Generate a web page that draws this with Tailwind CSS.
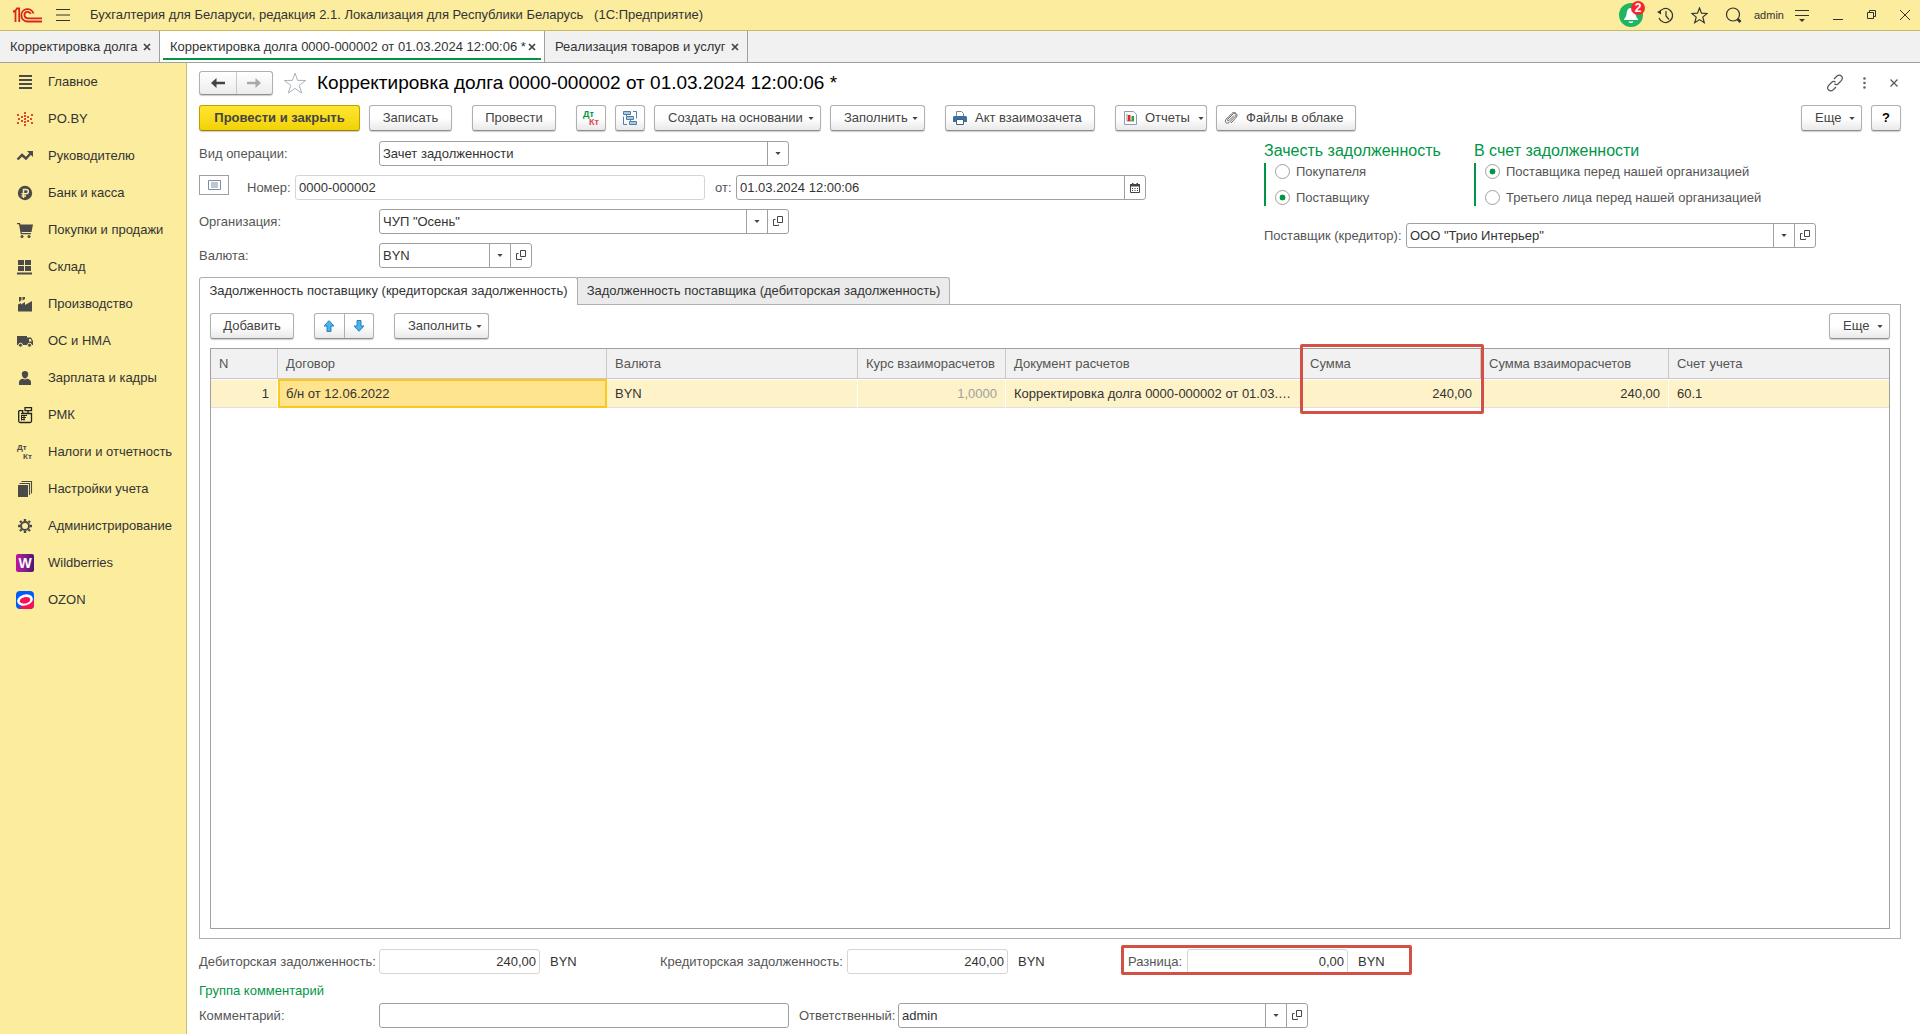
<!DOCTYPE html>
<html lang="ru">
<head>
<meta charset="utf-8">
<title>Корректировка долга — 1С:Предприятие</title>
<script src="https://cdn.jsdelivr.net/npm/@tailwindcss/browser@4"></script>
</head>
<body class="flex min-h-screen flex-col bg-white font-['Liberation_Sans',Arial,sans-serif] text-[13px] leading-4 text-[#333]">

<svg class="hidden" aria-hidden="true">
  <symbol id="caret" viewBox="0 0 7 4"><path d="M0 0h7L3.500 4z" fill="#444"/></symbol>
  <symbol id="open" viewBox="0 0 11 11"><path d="M4.500.5h5v6h-5zM2.500 3.500h-2v6h5v-1" fill="none" stroke="#444"/></symbol>
  <symbol id="cross" viewBox="0 0 8 8"><path d="M1 1l6 6M7 1L1 7" stroke="#444" stroke-width="1.700"/></symbol>
</svg>

<header class="flex h-[31px] items-center border-b border-[#c9b865] bg-[#fbec9e] pl-3">
  <svg class="h-[18px] w-[31px]" viewBox="0 0 31 18" fill="none" stroke="#d9261c" stroke-width="1.800" aria-label="1С"><path d="M1 5.500h2.500V16M1 5.500C3 5 4.500 4 5 2.500h2.200V16M21.500 7.500a6.200 6.200 0 1 0-6 8H30M18.700 8a3.200 3.200 0 1 0-3 4.300H30"/></svg>
  <button class="ml-3 h-4 w-4" aria-label="Меню"><svg class="h-4 w-4" viewBox="0 0 16 16"><path d="M1 2.500h14M1 8h14M1 13.500h14" stroke="#333" stroke-width="1.200"/></svg></button>
  <h1 class="ml-[19px] whitespace-pre">Бухгалтерия для Беларуси, редакция 2.1. Локализация для Республики Беларусь   (1С:Предприятие)</h1>
  <div class="ml-auto flex items-center">
    <button class="relative h-6 w-6" aria-label="Уведомления">
      <svg class="h-6 w-6" viewBox="0 0 24 24"><circle cx="12" cy="12" r="12" fill="#1fb562"/><path d="M12 5c-3.500 0-4 3-4.500 6-.4 2.500-1.200 4-2.500 5v1h14v-1c-1.300-1-2.100-2.500-2.500-5C16 8 15.500 5 12 5zM9.500 18.500h5c-1 2-4 2-5 0z" fill="#fff"/></svg>
      <span class="absolute -top-[2px] left-3 h-[14px] w-[14px] rounded-full bg-[#f8252f] text-xs leading-[14px] font-bold text-white">2</span>
    </button>
    <button class="ml-[14px] h-[17px] w-[17px]" aria-label="История"><svg class="h-[17px] w-[17px]" viewBox="0 0 17 17" fill="none" stroke="#333" stroke-width="1.200"><path d="M2 6a7 7 0 1 1 0 5M9 4v5l3 3.500"/><path d="M0 5l4 2.500L4 3z" fill="#333" stroke="none"/></svg></button>
    <button class="ml-[17px] h-[17px] w-[17px]" aria-label="Избранное"><svg class="h-[17px] w-[17px]" viewBox="0 0 17 17" fill="none" stroke="#333" stroke-width="1.200"><path d="M8.500 1l2 5.200 5.700.3-4.400 3.600 1.500 5.600-4.800-3.100-4.800 3.100 1.500-5.600L.8 6.500l5.700-.3z"/></svg></button>
    <button class="ml-[17px] h-[17px] w-[17px]" aria-label="Поиск"><svg class="h-[17px] w-[17px]" viewBox="0 0 17 17" fill="none" stroke="#333" stroke-width="1.200"><circle cx="8" cy="7.500" r="6.500"/><path d="M12.500 12l3 3" stroke-width="2.600"/></svg></button>
    <a href="#" class="ml-3 w-7 text-[11px]">admin</a>
    <button class="ml-3 h-4 w-4" aria-label="Настройки"><svg class="h-4 w-4" viewBox="0 0 16 16"><path d="M1 3.500h14M1 8.500h14" stroke="#333" stroke-width="1.200"/><path d="M5 12h6l-3 3z" fill="#333"/></svg></button>
    <button class="ml-[22px] h-3 w-3" aria-label="Свернуть"><svg class="h-3 w-3" viewBox="0 0 12 12"><path d="M1 10.500h10" stroke="#333"/></svg></button>
    <button class="ml-[22px] h-3 w-3" aria-label="Восстановить"><svg class="h-3 w-3" viewBox="0 0 12 12" fill="none" stroke="#333"><path d="M3.500 3.500v-2h6v6h-2M1.500 3.500h6v6h-6z"/></svg></button>
    <button class="mr-[9px] ml-[21px] h-3 w-3" aria-label="Закрыть"><svg class="h-3 w-3" viewBox="0 0 12 12"><path d="M1 1l10 10M11 1L1 11" stroke="#333"/></svg></button>
  </div>
</header>

<nav class="flex h-8 border-b border-[#a0a0a0] bg-[#f1f1f1]" aria-label="Открытые окна">
  <div class="flex w-[160px] items-center justify-between border-r border-[#a0a0a0] pr-2 pl-[10px]"><a href="#">Корректировка долга</a><button aria-label="Закрыть вкладку"><svg class="h-2 w-2"><use href="#cross"/></svg></button></div>
  <div class="relative flex w-[385px] items-center justify-between border-r border-[#a0a0a0] bg-white pr-2 pl-[10px]"><a href="#">Корректировка долга 0000-000002 от 01.03.2024 12:00:06 *</a><button aria-label="Закрыть вкладку"><svg class="h-2 w-2"><use href="#cross"/></svg></button><span class="absolute inset-x-[3px] bottom-[2px] h-[2px] bg-[#009646]"></span></div>
  <div class="flex w-[203px] items-center justify-between border-r border-[#a0a0a0] pr-2 pl-[10px]"><a href="#">Реализация товаров и услуг</a><button aria-label="Закрыть вкладку"><svg class="h-2 w-2"><use href="#cross"/></svg></button></div>
</nav>

<div class="flex flex-1">
  <nav class="w-[187px] flex-none border-r border-[#cdbd72] bg-[#fbec9e]" aria-label="Разделы">
    <a href="#" class="flex h-[37px] items-center gap-[14px] pl-4"><svg class="h-[18px] w-[18px]" viewBox="0 0 18 18"><path d="M3 3h13M3 7h13M3 11h13M3 15h13" stroke="#4a4a4a" stroke-width="2"/></svg>Главное</a>
    <a href="#" class="flex h-[37px] items-center gap-[14px] pl-4"><svg class="h-[18px] w-[18px]" viewBox="0 0 18 18" fill="#e0492c"><path d="M8 2h2v2H8zM8 5h2v2H8zM8 8h2v2H8zM8 11h2v2H8zM8 14h2v2H8zM5 6h2v2H5zM5 10h2v2H5zM11 6h2v2h-2zM11 10h2v2h-2zM1 4h2v2H1zM2 8h2v2H2zM1 12h2v2H1zM15 4h2v2h-2zM14 8h2v2h-2zM15 12h2v2h-2z"/></svg>PO.BY</a>
    <a href="#" class="flex h-[37px] items-center gap-[14px] pl-4"><svg class="h-[18px] w-[18px]" viewBox="0 0 18 18"><path d="M1.500 12.500l4.500-4.500 4 3.500 5-5.500" fill="none" stroke="#4a4a4a" stroke-width="2.400"/><path d="M11 4h6v6z" fill="#4a4a4a"/></svg>Руководителю</a>
    <a href="#" class="flex h-[37px] items-center gap-[14px] pl-4"><svg class="h-[18px] w-[18px]" viewBox="0 0 18 18"><circle cx="9" cy="9" r="7.200" fill="#4a4a4a"/><path d="M7.500 14V5.500h2.700a2 2 0 0 1 0 4.200H5.500M5.500 12h4.500" fill="none" stroke="#fbec9e" stroke-width="1.500"/></svg>Банк и касса</a>
    <a href="#" class="flex h-[37px] items-center gap-[14px] pl-4"><svg class="h-[18px] w-[18px]" viewBox="0 0 18 18" fill="#4a4a4a"><path d="M1 2h3l.6 1.500H17L15.500 11H5.600l.3 1H15v1.300H4.800L3 3.300H1z"/><circle cx="6" cy="15.500" r="1.500"/><circle cx="13" cy="15.500" r="1.500"/></svg>Покупки и продажи</a>
    <a href="#" class="flex h-[37px] items-center gap-[14px] pl-4"><svg class="h-[18px] w-[18px]" viewBox="0 0 18 18" fill="#4a4a4a"><path d="M2 2h6v5H2zM9 2h6v5H9zM2 8h6v5H2zM9 8h6v5H9zM1 14.500h15v2H1z"/></svg>Склад</a>
    <a href="#" class="flex h-[37px] items-center gap-[14px] pl-4"><svg class="h-[18px] w-[18px]" viewBox="0 0 18 18" fill="#4a4a4a"><path d="M2 16.500v-7l3-1.500v1.500L9 7v3l7-4v10.500zM3 2h2.500v3L3 7zM6.500 2H9v2L6.500 5.500z"/></svg>Производство</a>
    <a href="#" class="flex h-[37px] items-center gap-[14px] pl-4"><svg class="h-[18px] w-[18px]" viewBox="0 0 18 18" fill="#4a4a4a"><path fill-rule="evenodd" d="M1 4h10v9H1zM11 5.500h4L17 9v4h-6zM13 7v2.500h2.800L14.800 7z"/><circle cx="4.500" cy="13.200" r="2" stroke="#fbec9e"/><circle cx="13.500" cy="13.200" r="2" stroke="#fbec9e"/></svg>ОС и НМА</a>
    <a href="#" class="flex h-[37px] items-center gap-[14px] pl-4"><svg class="h-[18px] w-[18px]" viewBox="0 0 18 18" fill="#4a4a4a"><path d="M9 2c2 0 3.200 1.200 3.200 3S11 9.500 9 9.500 5.800 7 5.800 5 7 2 9 2zM3 16v-3c0-2 2-3 4-3.200 1.300.8 2.700.8 4 0 2 .2 4 1.200 4 3.200v3z"/></svg>Зарплата и кадры</a>
    <a href="#" class="flex h-[37px] items-center gap-[14px] pl-4"><svg class="h-[18px] w-[18px]" viewBox="0 0 18 18" fill="none" stroke="#222" stroke-width="1.300"><path d="M9 1.700h6.500v3H9zM12 5v2M2.700 4.700h4V7M2.700 4.700V15c0 1 .5 1.500 1.500 1.500H14c1 0 1.500-.5 1.500-1.500V7.500H5"/><path d="M5 9.500h6M5 11.500h5M5 13.500h4M5.500 9v5.500M8 9v5.500" stroke-width="1"/></svg>РМК</a>
    <a href="#" class="flex h-[37px] items-center gap-[14px] pl-4"><span class="flex h-[18px] w-[18px] flex-col text-[8px] leading-[9px] font-bold text-[#4a4a4a]"><span class="pl-px">Дт</span><span class="pl-[7px]">Кт</span></span>Налоги и отчетность</a>
    <a href="#" class="flex h-[37px] items-center gap-[14px] pl-4"><svg class="h-[18px] w-[18px]" viewBox="0 0 18 18"><path d="M2 5h10v12H2z" fill="#4a4a4a"/><path d="M3.500 3.500h10V15M5.500 1.500h10v12" fill="none" stroke="#4a4a4a" stroke-width="1.100"/></svg>Настройки учета</a>
    <a href="#" class="flex h-[37px] items-center gap-[14px] pl-4"><svg class="h-[18px] w-[18px]" viewBox="0 0 18 18" fill="none" stroke="#4a4a4a"><circle cx="9" cy="9" r="4" stroke-width="2"/><path d="M9 4V2M9 16v-2M4 9H2M16 9h-2M5.500 5.500L4 4M14 14l-1.500-1.500M5.500 12.500L4 14M14 4l-1.500 1.500" stroke-width="2.400"/></svg>Администрирование</a>
    <a href="#" class="flex h-[37px] items-center gap-[14px] pl-4"><span class="flex h-[18px] w-[18px] items-center justify-center rounded-[2px] bg-linear-to-r from-[#c3109c] to-[#4a1478] text-sm font-bold text-white">W</span>Wildberries</a>
    <a href="#" class="flex h-[37px] items-center gap-[14px] pl-4"><svg class="h-[18px] w-[18px]" viewBox="0 0 18 18"><rect width="18" height="18" rx="4" fill="#005bff"/><path d="M3 16.500L18 9v5a4 4 0 0 1-4 4H5z" fill="#f91155"/><ellipse cx="9" cy="9" rx="8" ry="5.500" fill="#fff" transform="rotate(-15 9 9)"/><ellipse cx="9" cy="9.300" rx="5.300" ry="3.200" fill="#f91155" transform="rotate(-12 9 9)"/></svg>OZON</a>
  </nav>

  <main class="flex min-w-0 flex-1 flex-col pt-2 pr-[19px] pb-[6px] pl-3">
    <div class="flex h-6 items-center">
      <div class="flex h-6 w-[74px] rounded-[3px] border border-[#b0b0b0] border-b-[#8f8f8f] bg-linear-to-b from-white to-[#ececec] shadow-[0_1px_1px_#ccc]">
        <button class="flex flex-1 items-center justify-center border-r border-[#c8c8c8]" aria-label="Назад"><svg class="h-3 w-[14px]" viewBox="0 0 14 12"><path d="M0 6l5.500-5v3.700H14v2.600H5.500V11z" fill="#444"/></svg></button>
        <button class="flex flex-1 items-center justify-center" aria-label="Вперед"><svg class="h-3 w-[14px]" viewBox="0 0 14 12"><path d="M14 6L8.500 1v3.700H0v2.600h8.500V11z" fill="#aaa"/></svg></button>
      </div>
      <button class="ml-[10px] h-6 w-6" aria-label="В избранное"><svg class="h-6 w-6" viewBox="0 0 24 24"><path d="M12 2l2.600 7.400 8 .1-6.300 4.800 2.300 7.700-6.600-4.600L5.400 22l2.300-7.700L1.400 9.500l8-.1z" fill="none" stroke="#aab0b8"/></svg></button>
      <h2 class="ml-[10px] text-[19px] leading-6 text-black">Корректировка долга 0000-000002 от 01.03.2024 12:00:06 *</h2>
      <button class="ml-auto h-[18px] w-[18px]" aria-label="Ссылка"><svg class="h-[18px] w-[18px]" viewBox="0 0 18 18" fill="none" stroke="#555" stroke-width="1.200"><path d="M8 5l3-3c3-2.500 7 1 4.500 4.300L12.500 9.500c-1.200 1.200-3 1.200-4 .3M10 13l-3 3c-3 2.500-7-1-4.500-4.300L5.500 8.500c1.200-1.200 3-1.200 4-.3"/></svg></button>
      <button class="ml-3 flex h-4 w-4 items-center justify-center" aria-label="Действия"><svg class="h-3 w-[3px]" viewBox="0 0 3 12" fill="#666"><circle cx="1.500" cy="1.500" r="1.300"/><circle cx="1.500" cy="6" r="1.300"/><circle cx="1.500" cy="10.500" r="1.300"/></svg></button>
      <button class="mr-[3px] ml-[18px] h-2 w-2" aria-label="Закрыть"><svg class="h-2 w-2" viewBox="0 0 8 8"><path d="M.5.5l7 7M7.500.5l-7 7" stroke="#555" stroke-width="1.200"/></svg></button>
    </div>

    <div class="mt-[10px] flex h-[26px] text-[#444]">
      <button class="w-[161px] rounded-[3px] border border-[#c0a000] border-b-[#a08500] bg-linear-to-b from-[#ffe62e] to-[#f2d200] font-bold shadow-[0_1px_1px_#ccc]">Провести и закрыть</button>
      <button class="ml-[9px] w-[83px] rounded-[3px] border border-[#b0b0b0] border-b-[#8f8f8f] bg-linear-to-b from-white from-50% to-[#e9e9e9] shadow-[0_1px_1px_#ccc]">Записать</button>
      <button class="ml-5 w-[84px] rounded-[3px] border border-[#b0b0b0] border-b-[#8f8f8f] bg-linear-to-b from-white from-50% to-[#e9e9e9] shadow-[0_1px_1px_#ccc]">Провести</button>
      <button class="ml-5 flex w-[30px] flex-col justify-center rounded-[3px] border border-[#b0b0b0] border-b-[#8f8f8f] bg-linear-to-b from-white from-50% to-[#e9e9e9] text-left text-[9px] leading-[8px] font-bold shadow-[0_1px_1px_#ccc]"><span class="pl-[6px] text-[#009646]">Дт</span><span class="pl-[12px] text-[#e04848]">Кт</span></button>
      <button class="ml-[9px] flex w-[30px] items-center justify-center rounded-[3px] border border-[#b0b0b0] border-b-[#8f8f8f] bg-linear-to-b from-white from-50% to-[#e9e9e9] shadow-[0_1px_1px_#ccc]" aria-label="Структура подчиненности"><svg class="h-4 w-4" viewBox="0 0 16 16" stroke="#4f7fa8"><path d="M1.500 1.500h7v3h-7zM4.500 6.500h7v3h-7zM7.500 11.500h7v3h-7z" fill="#a9c8e4"/><path d="M11 1.500h3.500v7M1.500 6.500v8H5M4.500 4.500v2M8.500 9.500v2" fill="none"/></svg></button>
      <button class="ml-[9px] flex w-[167px] items-center justify-between rounded-[3px] border border-[#b0b0b0] border-b-[#8f8f8f] bg-linear-to-b from-white from-50% to-[#e9e9e9] pr-[6px] pl-[13px] shadow-[0_1px_1px_#ccc]">Создать на основании<svg class="mt-px h-[3px] w-[6px]"><use href="#caret"/></svg></button>
      <button class="ml-[9px] flex w-[95px] items-center justify-between rounded-[3px] border border-[#b0b0b0] border-b-[#8f8f8f] bg-linear-to-b from-white from-50% to-[#e9e9e9] pr-[6px] pl-[13px] shadow-[0_1px_1px_#ccc]">Заполнить<svg class="mt-px h-[3px] w-[6px]"><use href="#caret"/></svg></button>
      <button class="ml-5 flex w-[150px] items-center gap-2 rounded-[3px] border border-[#b0b0b0] border-b-[#8f8f8f] bg-linear-to-b from-white from-50% to-[#e9e9e9] pl-[7px] shadow-[0_1px_1px_#ccc]"><svg class="h-[14px] w-[14px]" viewBox="0 0 14 14"><path d="M3.500 5V.5h5l2 2V5" fill="#fff" stroke="#6d8ba8"/><path d="M0 6l1-1h12l1 1v5H0z" fill="#3f6f9e"/><path d="M3.500 8.500h7v5h-7z" fill="#fff" stroke="#3f5f80"/></svg>Акт взаимозачета</button>
      <button class="ml-5 flex w-[92px] items-center gap-2 rounded-[3px] border border-[#b0b0b0] border-b-[#8f8f8f] bg-linear-to-b from-white from-50% to-[#e9e9e9] pr-[6px] pl-2 shadow-[0_1px_1px_#ccc]"><svg class="h-[14px] w-[13px] flex-none" viewBox="0 0 13 14"><path d="M.5.5h9l3 3v10H.5z" fill="#fff" stroke="#8b9bb0"/><path d="M3 3v7h7" fill="none" stroke="#888"/><path d="M4 4h2.500v6H4z" fill="#e22"/><path d="M7.500 5H10v5H7.500z" fill="#2a3"/></svg>Отчеты<svg class="mt-px ml-auto h-[3px] w-[6px] flex-none"><use href="#caret"/></svg></button>
      <button class="ml-[9px] flex w-[140px] items-center gap-2 rounded-[3px] border border-[#b0b0b0] border-b-[#8f8f8f] bg-linear-to-b from-white from-50% to-[#e9e9e9] pl-[7px] shadow-[0_1px_1px_#ccc]"><svg class="h-[14px] w-[14px]" viewBox="0 0 14 14" fill="none" stroke="#666"><path d="M10 4.500l-5 5c-1 1-2.200-.2-1.300-1.200L9 3c1.800-1.700 4 .5 2.300 2.300l-6 6c-2.500 2.400-5.500-.6-3.100-3.100L8 2.300C10-.2 14.500 3 12.500 6l-5.500 6"/></svg>Файлы в облаке</button>
      <button class="ml-auto flex w-[61px] items-center justify-between rounded-[3px] border border-[#b0b0b0] border-b-[#8f8f8f] bg-linear-to-b from-white from-50% to-[#e9e9e9] pr-[6px] pl-[13px] shadow-[0_1px_1px_#ccc]">Еще<svg class="mt-px h-[3px] w-[6px]"><use href="#caret"/></svg></button>
      <button class="ml-[9px] w-[30px] rounded-[3px] border border-[#b0b0b0] border-b-[#8f8f8f] bg-linear-to-b from-white from-50% to-[#e9e9e9] font-bold text-black shadow-[0_1px_1px_#ccc]">?</button>
    </div>

    <div class="mt-[10px] flex">
      <div class="flex w-[1065px] flex-none flex-col gap-[9px]">
        <div class="flex h-[25px] items-center">
          <label for="op" class="w-[180px] text-[#555]">Вид операции:</label>
          <div class="flex h-[25px] w-[410px] rounded-[3px] border border-[#a0a0a0]">
            <select id="op" class="h-full min-w-0 flex-1 appearance-none bg-transparent pl-[3px] outline-none"><option>Зачет задолженности</option></select>
            <span class="flex w-[21px] items-center justify-center border-l border-[#a0a0a0]"><svg class="h-[3px] w-[6px]"><use href="#caret"/></svg></span>
          </div>
        </div>
        <div class="flex h-[25px] items-center">
          <button class="flex h-5 w-[30px] items-center justify-center self-start border border-[#a0a0a0]" aria-label="Реквизиты"><svg class="h-[10px] w-[13px]" viewBox="0 0 13 10" fill="none" stroke="#7d8ea3"><path d="M.5.5h12v9H.5zM3 3h7M3 5h7M3 7h7"/></svg></button>
          <label for="num" class="ml-[18px] w-[48px] text-[#555]">Номер:</label>
          <input id="num" value="0000-000002" readonly class="h-[25px] w-[410px] rounded-[3px] border border-[#d5d5d5] px-[3px] outline-none">
          <label for="date" class="ml-[10px] w-[21px] text-[#555]">от:</label>
          <div class="flex h-[25px] w-[410px] rounded-[3px] border border-[#a0a0a0]">
            <input id="date" value="01.03.2024 12:00:06" class="min-w-0 flex-1 pl-[3px] outline-none">
            <button class="flex w-[21px] items-center justify-center border-l border-[#a0a0a0]" aria-label="Календарь"><svg class="h-[10px] w-[10px]" viewBox="0 0 10 10"><path d="M.5 1.500h9v8h-9z" fill="none" stroke="#444"/><path d="M0 1h10v2.500H0zM2 0h1.500v2H2zM6.500 0H8v2H6.500zM2 5h1v1H2zM4.500 5h1v1h-1zM7 5h1v1H7zM2 7h1v1H2zM4.500 7h1v1h-1zM7 7h1v1H7z" fill="#444"/></svg></button>
          </div>
        </div>
        <div class="flex h-[25px] items-center">
          <label for="org" class="w-[180px] text-[#555]">Организация:</label>
          <div class="flex h-[25px] w-[410px] rounded-[3px] border border-[#a0a0a0]">
            <input id="org" value='ЧУП "Осень"' class="min-w-0 flex-1 pl-[3px] outline-none">
            <button class="flex w-[21px] items-center justify-center border-l border-[#a0a0a0]" aria-label="Выбрать"><svg class="h-[3px] w-[6px]"><use href="#caret"/></svg></button>
            <button class="flex w-[21px] items-center justify-center border-l border-[#a0a0a0]" aria-label="Открыть"><svg class="h-[11px] w-[11px]"><use href="#open"/></svg></button>
          </div>
        </div>
        <div class="flex h-[25px] items-center">
          <label for="cur" class="w-[180px] text-[#555]">Валюта:</label>
          <div class="flex h-[25px] w-[153px] rounded-[3px] border border-[#a0a0a0]">
            <input id="cur" value="BYN" class="min-w-0 flex-1 pl-[3px] outline-none">
            <button class="flex w-[21px] items-center justify-center border-l border-[#a0a0a0]" aria-label="Выбрать"><svg class="h-[3px] w-[6px]"><use href="#caret"/></svg></button>
            <button class="flex w-[21px] items-center justify-center border-l border-[#a0a0a0]" aria-label="Открыть"><svg class="h-[11px] w-[11px]"><use href="#open"/></svg></button>
          </div>
        </div>
      </div>

      <div>
        <div class="flex">
          <fieldset class="w-[210px]">
            <legend class="text-base leading-[20px] text-[#009646]">Зачесть задолженность</legend>
            <div class="mt-[2px] flex h-[43px] flex-col justify-between border-l-2 border-[#009646] pl-[9px] text-[#555]">
              <label class="flex h-[17px] items-center gap-[6px]"><input type="radio" name="debt" class="h-[15px] w-[15px] appearance-none rounded-full border border-[#a0a0a0] checked:bg-radial checked:from-[#009646] checked:from-30% checked:to-white checked:to-35%">Покупателя</label>
              <label class="flex h-[17px] items-center gap-[6px]"><input type="radio" name="debt" checked class="h-[15px] w-[15px] appearance-none rounded-full border border-[#a0a0a0] checked:bg-radial checked:from-[#009646] checked:from-30% checked:to-white checked:to-35%">Поставщику</label>
            </div>
          </fieldset>
          <fieldset>
            <legend class="text-base leading-[20px] text-[#009646]">В счет задолженности</legend>
            <div class="mt-[2px] flex h-[43px] flex-col justify-between border-l-2 border-[#009646] pl-[9px] text-[#555]">
              <label class="flex h-[17px] items-center gap-[6px]"><input type="radio" name="against" checked class="h-[15px] w-[15px] appearance-none rounded-full border border-[#a0a0a0] checked:bg-radial checked:from-[#009646] checked:from-30% checked:to-white checked:to-35%">Поставщика перед нашей организацией</label>
              <label class="flex h-[17px] items-center gap-[6px]"><input type="radio" name="against" class="h-[15px] w-[15px] appearance-none rounded-full border border-[#a0a0a0] checked:bg-radial checked:from-[#009646] checked:from-30% checked:to-white checked:to-35%">Третьего лица перед нашей организацией</label>
            </div>
          </fieldset>
        </div>
        <div class="mt-[17px] flex items-center">
          <label for="sup" class="w-[142px] text-[#555]">Поставщик (кредитор):</label>
          <div class="flex h-[25px] w-[410px] rounded-[3px] border border-[#a0a0a0]">
            <input id="sup" value='ООО "Трио Интерьер"' class="min-w-0 flex-1 pl-[3px] outline-none">
            <button class="flex w-[21px] items-center justify-center border-l border-[#a0a0a0]" aria-label="Выбрать"><svg class="h-[3px] w-[6px]"><use href="#caret"/></svg></button>
            <button class="flex w-[21px] items-center justify-center border-l border-[#a0a0a0]" aria-label="Открыть"><svg class="h-[11px] w-[11px]"><use href="#open"/></svg></button>
          </div>
        </div>
      </div>
    </div>

    <div class="mt-[9px] flex h-[27px]" role="tablist">
      <button role="tab" aria-selected="true" class="z-10 -mb-px w-[379px] rounded-t-[3px] border border-b-0 border-[#b0b0b0] bg-white pb-[2px]">Задолженность поставщику (кредиторская задолженность)</button>
      <button role="tab" class="-ml-px w-[373px] rounded-tr-[3px] border border-b-0 border-[#b0b0b0] bg-[#ebebeb] pb-px">Задолженность поставщика (дебиторская задолженность)</button>
    </div>
    <section class="flex flex-1 flex-col border border-[#b0b0b0] px-[10px] pt-2 pb-[9px]">
      <div class="flex h-[26px] text-[#444]">
        <button class="w-[84px] rounded-[3px] border border-[#b0b0b0] border-b-[#8f8f8f] bg-linear-to-b from-white from-50% to-[#e9e9e9] shadow-[0_1px_1px_#ccc]">Добавить</button>
        <div class="ml-5 flex w-[60px] rounded-[3px] border border-[#b0b0b0] border-b-[#8f8f8f] bg-linear-to-b from-white from-50% to-[#e9e9e9] shadow-[0_1px_1px_#ccc]">
          <button class="flex flex-1 items-center justify-center border-r border-[#b0b0b0]" aria-label="Вверх"><svg class="h-3 w-3" viewBox="0 0 12 12"><path d="M6 .7L11 6H8v5.500H4V6H1z" fill="#46b4f0" stroke="#2f7fb0"/></svg></button>
          <button class="flex flex-1 items-center justify-center" aria-label="Вниз"><svg class="h-3 w-3" viewBox="0 0 12 12"><path d="M6 11.300L11 6H8V.5H4V6H1z" fill="#46b4f0" stroke="#2f7fb0"/></svg></button>
        </div>
        <button class="ml-5 flex w-[95px] items-center justify-between rounded-[3px] border border-[#b0b0b0] border-b-[#8f8f8f] bg-linear-to-b from-white from-50% to-[#e9e9e9] pr-[6px] pl-[13px] shadow-[0_1px_1px_#ccc]">Заполнить<svg class="mt-px h-[3px] w-[6px]"><use href="#caret"/></svg></button>
        <button class="ml-auto flex w-[61px] items-center justify-between rounded-[3px] border border-[#b0b0b0] border-b-[#8f8f8f] bg-linear-to-b from-white from-50% to-[#e9e9e9] pr-[6px] pl-[13px] shadow-[0_1px_1px_#ccc]">Еще<svg class="mt-px h-[3px] w-[6px]"><use href="#caret"/></svg></button>
      </div>

      <div class="mt-[9px] flex-1 border border-[#a0a0a0]">
        <table class="w-full table-fixed border-separate border-spacing-0">
          <colgroup><col class="w-[67px]"><col class="w-[329px]"><col class="w-[251px]"><col class="w-[148px]"><col class="w-[296px]"><col class="w-[179px]"><col class="w-[188px]"><col></colgroup>
          <thead>
            <tr class="h-[30px] bg-[#f1f1f1] text-left whitespace-nowrap text-[#555] *:border-b *:border-[#c8c8c8] *:px-2 *:font-normal">
              <th class="border-r">N</th><th class="border-r">Договор</th><th class="border-r">Валюта</th><th class="border-r">Курс взаиморасчетов</th><th class="border-r">Документ расчетов</th>
              <th class="relative border-r">Сумма<span class="pointer-events-none absolute -top-[5px] -left-[2px] h-[70px] w-[184px] rounded-[2px] border-3 border-[#d25046]"></span></th>
              <th class="border-r">Сумма взаиморасчетов</th><th>Счет учета</th>
            </tr>
          </thead>
          <tbody>
            <tr class="h-[29px] bg-[#fef2c8] whitespace-nowrap *:border-y *:border-t-white *:border-b-[#e0e0e0] *:px-2">
              <td class="border-r border-r-white text-right">1</td>
              <td class="bg-[#fee48e] outline-2 -outline-offset-2 outline-[#fbc81e]">б/н от 12.06.2022</td>
              <td class="border-r border-r-white">BYN</td>
              <td class="border-r border-r-white text-right text-[#a0a0a0]">1,0000</td>
              <td class="border-r border-r-white">Корректировка долга 0000-000002 от 01.03.…</td>
              <td class="border-r border-r-white text-right">240,00</td>
              <td class="border-r border-r-white text-right">240,00</td>
              <td>60.1</td>
            </tr>
          </tbody>
        </table>
      </div>
    </section>

    <div class="mt-[10px] flex h-[25px] items-center">
      <label for="deb" class="w-[180px] text-[#555]">Дебиторская задолженность:</label>
      <input id="deb" value="240,00" readonly class="h-[25px] w-[161px] rounded-[3px] border border-[#d5d5d5] px-[3px] text-right outline-none">
      <span class="ml-[10px] w-[110px]">BYN</span>
      <label for="cred" class="w-[187px] text-[#555]">Кредиторская задолженность:</label>
      <input id="cred" value="240,00" readonly class="h-[25px] w-[161px] rounded-[3px] border border-[#d5d5d5] px-[3px] text-right outline-none">
      <span class="ml-[10px] w-[103px]">BYN</span>
      <div class="relative flex items-center pl-[7px]">
        <label for="diff" class="w-[59px] text-[#555]">Разница:</label>
        <input id="diff" value="0,00" readonly class="h-[25px] w-[161px] rounded-[3px] border border-[#d5d5d5] px-[3px] text-right outline-none">
        <span class="ml-[10px] w-[54px]">BYN</span>
        <span class="pointer-events-none absolute inset-x-0 -top-[4px] -bottom-px rounded-[2px] border-3 border-[#d25046]"></span>
      </div>
    </div>

    <h3 class="mt-[7px] leading-[20px] text-[#009646]">Группа комментарий</h3>
    <div class="mt-[2px] flex h-[25px] items-center">
      <label for="com" class="w-[180px] text-[#555]">Комментарий:</label>
      <input id="com" class="h-[25px] w-[410px] rounded-[3px] border border-[#a0a0a0] px-[3px] outline-none">
      <label for="resp" class="ml-[10px] w-[99px] text-[#555]">Ответственный:</label>
      <div class="flex h-[25px] w-[410px] rounded-[3px] border border-[#a0a0a0]">
        <input id="resp" value="admin" class="min-w-0 flex-1 pl-[3px] outline-none">
        <button class="flex w-[21px] items-center justify-center border-l border-[#a0a0a0]" aria-label="Выбрать"><svg class="h-[3px] w-[6px]"><use href="#caret"/></svg></button>
        <button class="flex w-[21px] items-center justify-center border-l border-[#a0a0a0]" aria-label="Открыть"><svg class="h-[11px] w-[11px]"><use href="#open"/></svg></button>
      </div>
    </div>
  </main>
</div>
</body>
</html>
